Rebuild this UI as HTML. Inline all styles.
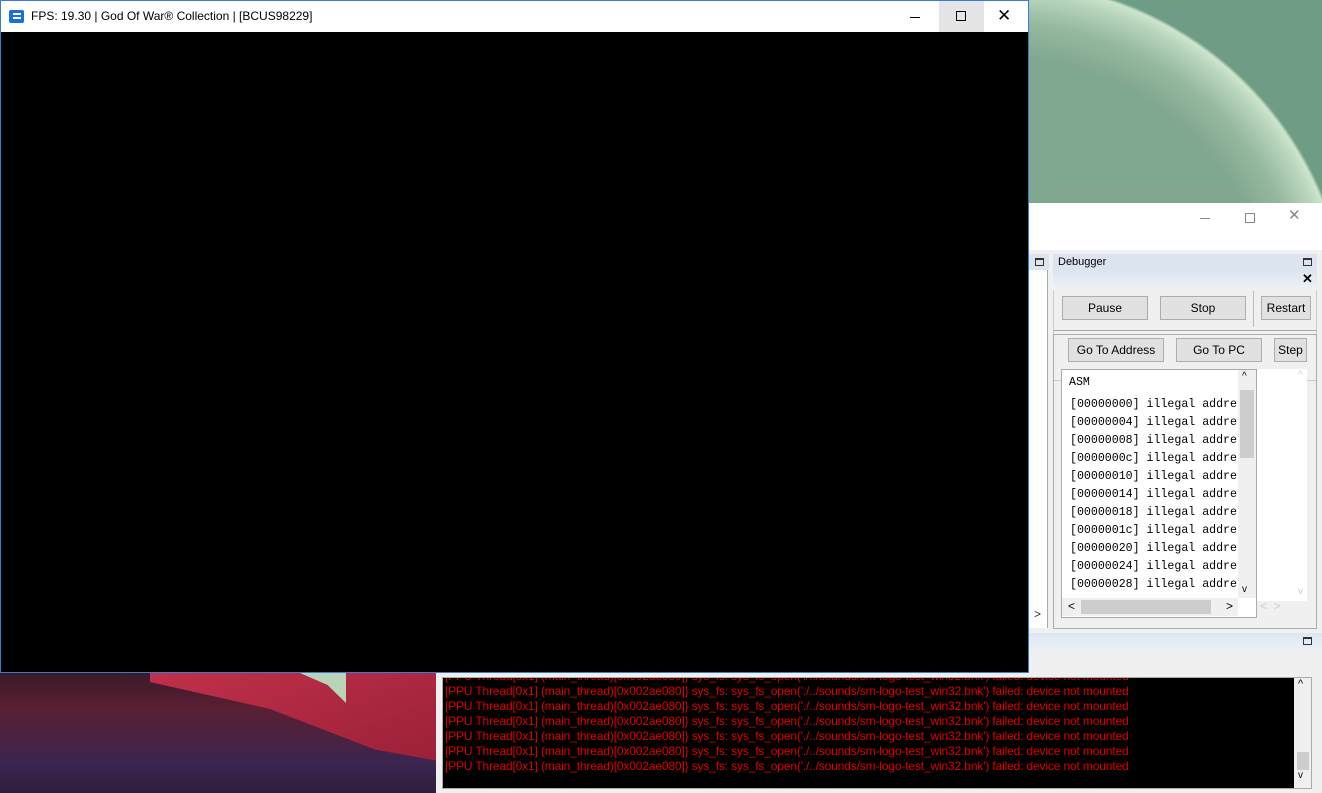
<!DOCTYPE html>
<html><head><meta charset="utf-8"><style>
*{margin:0;padding:0;box-sizing:border-box}
body{width:1322px;height:793px;overflow:hidden;position:relative;font-family:"Liberation Sans",sans-serif;background:#5e8f78}
.a{position:absolute}
.btn{position:absolute;background:#e1e1e1;border:1px solid #adadad;font-size:12px;color:#000;text-align:center;line-height:22px}
.mono{font-family:"Liberation Mono",monospace;font-size:11.6px;color:#000}
.log div{height:15px;line-height:15px;font-size:12px;color:#e00000;white-space:nowrap;letter-spacing:-0.15px}
</style></head><body>
<!-- moon background -->
<div class="a" style="left:1029px;top:0;width:293px;height:204px;background:#6f9c85;overflow:hidden">
 <div class="a" style="left:-379px;top:-20px;width:700px;height:700px;border-radius:50%;background:radial-gradient(circle closest-side,#80a88f 78%,#95b99f 88%,#b9d6bd 96%,#cde5cd 99%,#6f9c85 100%)"></div>
</div>
<!-- bottom-left landscape -->
<div class="a" style="left:0;top:673px;width:436px;height:120px;background:linear-gradient(180deg,#3a1a28 0%,#5a1f33 30%,#4a2240 55%,#3a2550 75%,#2e1e3a 100%);overflow:hidden">
 <div class="a" style="left:150px;top:0;width:300px;height:90px;background:linear-gradient(160deg,#c0304a,#9a2038);clip-path:polygon(0 0,100% 0,100% 100%,75% 85%,40% 40%,0 10%)"></div>
 <div class="a" style="left:300px;top:0;width:46px;height:30px;background:#b9d4b8;clip-path:polygon(0 0,100% 0,100% 100%,60% 40%)"></div>
</div>
<!-- main window -->
<div class="a" style="left:0;top:0;width:1029px;height:673px;background:#000;border:1px solid #3a7bd5">
 <div class="a" style="left:0;top:0;width:1027px;height:31px;background:#fff">
  <div class="a" style="left:8px;top:9px;width:15px;height:13px;background:#1a6fe0;border-radius:2px"></div>
  <div class="a" style="left:12px;top:12px;width:8px;height:2px;background:#fff"></div>
  <div class="a" style="left:12px;top:16px;width:8px;height:2px;background:#fff"></div>
  <div class="a" style="left:30px;top:8px;font-size:12px;color:#000">FPS: 19.30 | God Of War® Collection | [BCUS98229]</div>
  <div class="a" style="left:909px;top:16px;width:10px;height:1px;background:#000"></div>
  <div class="a" style="left:938px;top:0;width:45px;height:31px;background:#e5e5e5"></div>
  <div class="a" style="left:955px;top:10px;width:10px;height:10px;border:1px solid #000"></div>
  <div class="a" style="left:996px;top:5px;font-size:17px;color:#000">✕</div>
 </div>
</div>
<!-- right window -->
<div class="a" style="left:1029px;top:203px;width:293px;height:470px;background:#f0f0f0">
 <div class="a" style="left:0;top:0;width:293px;height:47px;background:#fff"></div>
 <div class="a" style="left:171px;top:15px;width:10px;height:1px;background:#888"></div>
 <div class="a" style="left:216px;top:10px;width:10px;height:10px;border:1px solid #888"></div>
 <div class="a" style="left:259px;top:3px;font-size:15px;color:#888">✕</div>
 <div class="a" style="left:0;top:51px;width:20px;height:16px;background:#dbe4ef"></div>
 <div class="a" style="left:6px;top:55px;width:9px;height:8px;border:1px solid #333;border-top-width:2px"></div>
 <div class="a" style="left:0;top:67px;width:19px;height:358px;background:#fff;border-right:1px solid #aaa"></div>
 <div class="a" style="left:5px;top:404px;font-size:12px;color:#333">&gt;</div>
 <div class="a" style="left:24px;top:51px;width:264px;height:16px;background:#dbe4ef;font-size:11px;line-height:16px;padding-left:5px">Debugger</div>
 <div class="a" style="left:274px;top:55px;width:9px;height:8px;border:1px solid #333;border-top-width:2px"></div>
 <div class="a" style="left:24px;top:67px;width:264px;height:20px;background:linear-gradient(#dce5f0,#eef2f7)"></div>
 <div class="a" style="left:273px;top:68px;font-size:13px;font-weight:bold">✕</div>
 <div class="a" style="left:24px;top:87px;width:264px;height:91px;border:1px solid #ccc;border-top:none"></div>
 <div class="btn" style="left:33px;top:93px;width:86px;height:24px">Pause</div>
 <div class="btn" style="left:131px;top:93px;width:86px;height:24px">Stop</div>
 <div class="a" style="left:224px;top:88px;width:1px;height:36px;background:#bbb"></div>
 <div class="btn" style="left:232px;top:93px;width:50px;height:24px">Restart</div>
 <div class="a" style="left:24px;top:127px;width:264px;height:1px;background:#aaa"></div>
 <div class="a" style="left:24px;top:131px;width:264px;height:295px;border:1px solid #aaa"></div>
 <div class="btn" style="left:39px;top:135px;width:96px;height:24px">Go To Address</div>
 <div class="btn" style="left:147px;top:135px;width:86px;height:24px">Go To PC</div>
 <div class="btn" style="left:245px;top:135px;width:33px;height:24px">Step</div>
 <div class="a" style="left:32px;top:166px;width:196px;height:249px;background:#fff;border:1px solid #aaa"></div>
 <div class="a" style="left:228px;top:166px;width:50px;height:232px;background:#fff"></div>
 <div class="a" style="left:269px;top:167px;font-size:10px;color:#ccc">^</div>
 <div class="a" style="left:269px;top:383px;font-size:10px;color:#ccc">v</div>
 <div class="a" style="left:231px;top:396px;font-size:12px;color:#ccc">&lt;&nbsp;&nbsp;&gt;</div>
 <div class="a mono" style="left:40px;top:173px">ASM</div>
 <div class="a mono" style="left:41px;top:193px;line-height:18px;white-space:pre">[00000000] illegal addre
[00000004] illegal addre
[00000008] illegal addre
[0000000c] illegal addre
[00000010] illegal addre
[00000014] illegal addre
[00000018] illegal addre
[0000001c] illegal addre
[00000020] illegal addre
[00000024] illegal addre
[00000028] illegal addre</div>
 <div class="a" style="left:209px;top:167px;width:18px;height:228px;background:#f0f0f0"></div>
 <div class="a" style="left:211px;top:187px;width:14px;height:68px;background:#cdcdcd"></div>
 <div class="a" style="left:213px;top:168px;font-size:10px">^</div>
 <div class="a" style="left:213px;top:381px;font-size:10px">v</div>
 <div class="a" style="left:33px;top:395px;width:176px;height:18px;background:#f0f0f0"></div>
 <div class="a" style="left:52px;top:397px;width:130px;height:14px;background:#cdcdcd"></div>
 <div class="a" style="left:39px;top:396px;font-size:12px">&lt;</div>
 <div class="a" style="left:197px;top:396px;font-size:12px">&gt;</div>
 <div class="a" style="left:0;top:430px;width:293px;height:16px;background:linear-gradient(#dde6f0,#eaf0f6)"></div>
 <div class="a" style="left:274px;top:434px;width:9px;height:8px;border:1px solid #333;border-top-width:2px"></div>
</div>
<!-- log panel -->
<div class="a" style="left:436px;top:673px;width:886px;height:120px;background:#f0f0f0">
 <div class="a log" style="left:6px;top:4px;width:870px;height:112px;background:#000;border:1px solid #aaa;overflow:hidden;padding-left:2px">
  <div style="margin-top:-9px">[PPU Thread[0x1] (main_thread)[0x002ae080]} sys_fs: sys_fs_open('./../sounds/sm-logo-test_win32.bnk') failed: device not mounted</div>
  <div>[PPU Thread[0x1] (main_thread)[0x002ae080]} sys_fs: sys_fs_open('./../sounds/sm-logo-test_win32.bnk') failed: device not mounted</div>
  <div>[PPU Thread[0x1] (main_thread)[0x002ae080]} sys_fs: sys_fs_open('./../sounds/sm-logo-test_win32.bnk') failed: device not mounted</div>
  <div>[PPU Thread[0x1] (main_thread)[0x002ae080]} sys_fs: sys_fs_open('./../sounds/sm-logo-test_win32.bnk') failed: device not mounted</div>
  <div>[PPU Thread[0x1] (main_thread)[0x002ae080]} sys_fs: sys_fs_open('./../sounds/sm-logo-test_win32.bnk') failed: device not mounted</div>
  <div>[PPU Thread[0x1] (main_thread)[0x002ae080]} sys_fs: sys_fs_open('./../sounds/sm-logo-test_win32.bnk') failed: device not mounted</div>
  <div>[PPU Thread[0x1] (main_thread)[0x002ae080]} sys_fs: sys_fs_open('./../sounds/sm-logo-test_win32.bnk') failed: device not mounted</div>
 </div>
 <div class="a" style="left:858px;top:5px;width:17px;height:110px;background:#f0f0f0"></div>
 <div class="a" style="left:861px;top:79px;width:12px;height:18px;background:#cdcdcd"></div>
 <div class="a" style="left:862px;top:5px;font-size:11px">^</div>
 <div class="a" style="left:862px;top:97px;font-size:10px">v</div>
</div>
</body></html>
